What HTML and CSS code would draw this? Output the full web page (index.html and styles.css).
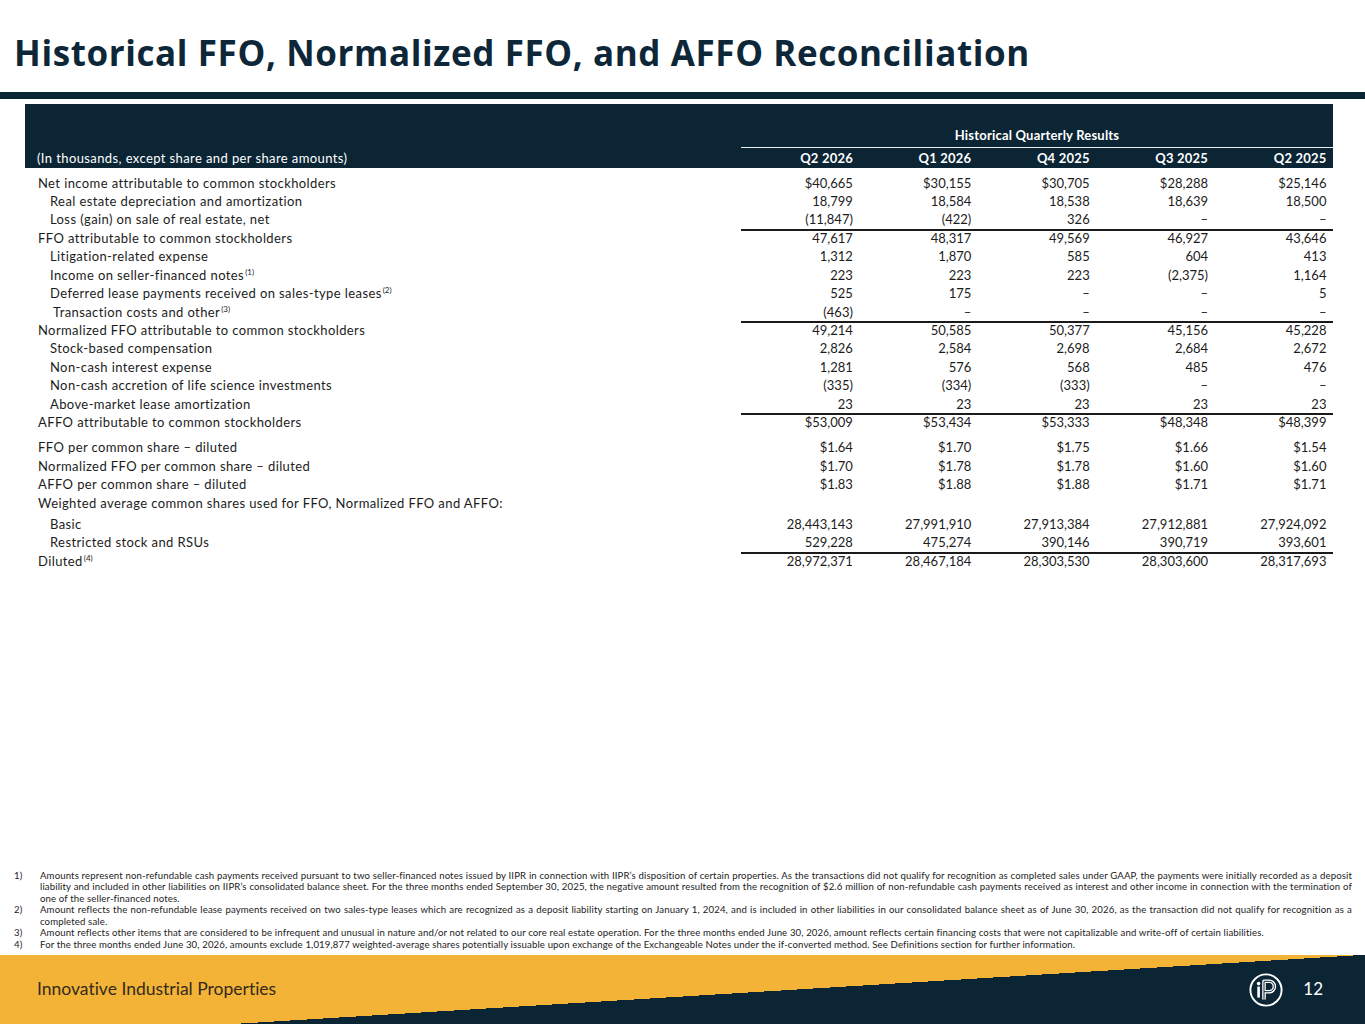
FILE: index.html
```html
<!DOCTYPE html>
<html lang="en">
<head>
<meta charset="utf-8">
<title>Historical FFO, Normalized FFO, and AFFO Reconciliation</title>
<link rel="stylesheet" href="styles.css">
</head>
<body>
<div class="page">
  <header class="title-area">
    <h1 class="title">Historical FFO, Normalized FFO, and AFFO Reconciliation</h1>
  </header>
  <div class="title-bar"></div>

  <section class="recon">
    <div class="thead">
      <div class="group-row">
        <div class="group-spacer"></div>
        <div class="group-label">Historical Quarterly Results</div>
      </div>
      <div class="row head-row">
        <div class="label">(In thousands, except share and per share amounts)</div>
        <div class="num">Q2 2026</div>
        <div class="num">Q1 2026</div>
        <div class="num">Q4 2025</div>
        <div class="num">Q3 2025</div>
        <div class="num">Q2 2025</div>
      </div>
    </div>

    <div class="tbody">
      <div class="row">
        <div class="label">Net income attributable to common stockholders</div>
        <div class="num">$40,665</div><div class="num">$30,155</div><div class="num">$30,705</div><div class="num">$28,288</div><div class="num">$25,146</div>
      </div>
      <div class="row">
        <div class="label indent">Real estate depreciation and amortization</div>
        <div class="num">18,799</div><div class="num">18,584</div><div class="num">18,538</div><div class="num">18,639</div><div class="num">18,500</div>
      </div>
      <div class="row">
        <div class="label indent">Loss (gain) on sale of real estate, net</div>
        <div class="num">(11,847)</div><div class="num">(422)</div><div class="num">326</div><div class="num">–</div><div class="num">–</div>
      </div>
      <div class="row total">
        <div class="label">FFO attributable to common stockholders</div>
        <div class="num">47,617</div><div class="num">48,317</div><div class="num">49,569</div><div class="num">46,927</div><div class="num">43,646</div>
      </div>
      <div class="row">
        <div class="label indent">Litigation-related expense</div>
        <div class="num">1,312</div><div class="num">1,870</div><div class="num">585</div><div class="num">604</div><div class="num">413</div>
      </div>
      <div class="row">
        <div class="label indent">Income on seller-financed notes<sup class="fn">(1)</sup></div>
        <div class="num">223</div><div class="num">223</div><div class="num">223</div><div class="num">(2,375)</div><div class="num">1,164</div>
      </div>
      <div class="row">
        <div class="label indent">Deferred lease payments received on sales-type leases<sup class="fn">(2)</sup></div>
        <div class="num">525</div><div class="num">175</div><div class="num">–</div><div class="num">–</div><div class="num">5</div>
      </div>
      <div class="row">
        <div class="label indent-wide">Transaction costs and other<sup class="fn">(3)</sup></div>
        <div class="num">(463)</div><div class="num">–</div><div class="num">–</div><div class="num">–</div><div class="num">–</div>
      </div>
      <div class="row total">
        <div class="label">Normalized FFO attributable to common stockholders</div>
        <div class="num">49,214</div><div class="num">50,585</div><div class="num">50,377</div><div class="num">45,156</div><div class="num">45,228</div>
      </div>
      <div class="row">
        <div class="label indent">Stock-based compensation</div>
        <div class="num">2,826</div><div class="num">2,584</div><div class="num">2,698</div><div class="num">2,684</div><div class="num">2,672</div>
      </div>
      <div class="row">
        <div class="label indent">Non-cash interest expense</div>
        <div class="num">1,281</div><div class="num">576</div><div class="num">568</div><div class="num">485</div><div class="num">476</div>
      </div>
      <div class="row">
        <div class="label indent">Non-cash accretion of life science investments</div>
        <div class="num">(335)</div><div class="num">(334)</div><div class="num">(333)</div><div class="num">–</div><div class="num">–</div>
      </div>
      <div class="row">
        <div class="label indent">Above-market lease amortization</div>
        <div class="num">23</div><div class="num">23</div><div class="num">23</div><div class="num">23</div><div class="num">23</div>
      </div>
      <div class="row total">
        <div class="label">AFFO attributable to common stockholders</div>
        <div class="num">$53,009</div><div class="num">$53,434</div><div class="num">$53,333</div><div class="num">$48,348</div><div class="num">$48,399</div>
      </div>

      <div class="row section-start">
        <div class="label">FFO per common share – diluted</div>
        <div class="num">$1.64</div><div class="num">$1.70</div><div class="num">$1.75</div><div class="num">$1.66</div><div class="num">$1.54</div>
      </div>
      <div class="row">
        <div class="label">Normalized FFO per common share – diluted</div>
        <div class="num">$1.70</div><div class="num">$1.78</div><div class="num">$1.78</div><div class="num">$1.60</div><div class="num">$1.60</div>
      </div>
      <div class="row">
        <div class="label">AFFO per common share – diluted</div>
        <div class="num">$1.83</div><div class="num">$1.88</div><div class="num">$1.88</div><div class="num">$1.71</div><div class="num">$1.71</div>
      </div>
      <div class="row tall">
        <div class="label">Weighted average common shares used for FFO, Normalized FFO and AFFO:</div>
      </div>
      <div class="row">
        <div class="label indent">Basic</div>
        <div class="num">28,443,143</div><div class="num">27,991,910</div><div class="num">27,913,384</div><div class="num">27,912,881</div><div class="num">27,924,092</div>
      </div>
      <div class="row">
        <div class="label indent">Restricted stock and RSUs</div>
        <div class="num">529,228</div><div class="num">475,274</div><div class="num">390,146</div><div class="num">390,719</div><div class="num">393,601</div>
      </div>
      <div class="row total">
        <div class="label">Diluted<sup class="fn">(4)</sup></div>
        <div class="num">28,972,371</div><div class="num">28,467,184</div><div class="num">28,303,530</div><div class="num">28,303,600</div><div class="num">28,317,693</div>
      </div>
    </div>
  </section>

  <div class="spacer"></div>

  <ol class="notes">
    <li><span class="note-no">1)</span><span class="note-text">Amounts represent non-refundable cash payments received pursuant to two seller-financed notes issued by IIPR in connection with IIPR’s disposition of certain properties. As the transactions did not qualify for recognition as completed sales under GAAP, the payments were initially recorded as a deposit liability and included in other liabilities on IIPR’s consolidated balance sheet. For the three months ended September 30, 2025, the negative amount resulted from the recognition of $2.6 million of non-refundable cash payments received as interest and other income in connection with the termination of one of the seller-financed notes.</span></li>
    <li><span class="note-no">2)</span><span class="note-text">Amount reflects the non-refundable lease payments received on two sales-type leases which are recognized as a deposit liability starting on January 1, 2024, and is included in other liabilities in our consolidated balance sheet as of June 30, 2026, as the transaction did not qualify for recognition as a completed sale.</span></li>
    <li><span class="note-no">3)</span><span class="note-text">Amount reflects other items that are considered to be infrequent and unusual in nature and/or not related to our core real estate operation. For the three months ended June 30, 2026, amount reflects certain financing costs that were not capitalizable and write-off of certain liabilities.</span></li>
    <li><span class="note-no">4)</span><span class="note-text">For the three months ended June 30, 2026, amounts exclude 1,019,877 weighted-average shares potentially issuable upon exchange of the Exchangeable Notes under the if-converted method. See Definitions section for further information.</span></li>
  </ol>

  <footer class="footer">
    <div class="company">Innovative Industrial Properties</div>
    <div class="footer-right">
      <svg class="logo" width="34" height="34" viewBox="0 0 34 34" aria-hidden="true">
        <circle cx="17" cy="17" r="15.6" fill="none" stroke="#ffffff" stroke-width="1.9"/>
        <circle cx="9.6" cy="10.6" r="1.8" fill="#ffffff"/>
        <rect x="8.3" y="13.6" width="2.6" height="11" fill="#ffffff"/>
        <path d="M15 26.5 V8.3 H20.2 A5.2 5.2 0 0 1 20.2 18.7 H15" fill="none" stroke="#ffffff" stroke-width="3.6" stroke-linejoin="round"/>
        <path d="M15 26.5 V8.3 H20.2 A5.2 5.2 0 0 1 20.2 18.7 H15" fill="none" stroke="#0b2535" stroke-width="1" stroke-linejoin="round"/>
      </svg>
      <span class="page-no">12</span>
    </div>
  </footer>
</div>
</body>
</html>
```

FILE: styles.css
```css
* {
  box-sizing: border-box;
}

html, body {
  margin: 0;
  padding: 0;
}

body {
  background: #ffffff;
  font-family: "Lato", "Open Sans", "Liberation Sans", sans-serif;
  font-variant-ligatures: none;
  color: #1c1c1c;
}

.page {
  width: 1365px;
  height: 1024px;
  display: flex;
  flex-direction: column;
  overflow: hidden;
}

.title-area {
  padding: 32px 14px 0;
}

.title {
  margin: 0;
  font-family: "Open Sans", "Lato", sans-serif;
  font-size: 35px;
  line-height: 42px;
  font-weight: 700;
  color: #0d2738;
  letter-spacing: 0.6px;
  white-space: nowrap;
}

.title-bar {
  margin-top: 18px;
  height: 7px;
  background: #0b2535;
}

.recon {
  margin: 5px 0 0 25px;
  width: 1308px;
  font-size: 13px;
}

.thead {
  background: #0b2535;
  color: #ffffff;
}

.group-row {
  display: grid;
  grid-template-columns: 716px 592px;
  height: 44px;
}

.group-label {
  align-self: end;
  font-weight: 700;
  text-align: center;
  line-height: 18px;
  padding-bottom: 3px;
  border-bottom: 1.5px solid #e6ecef;
  letter-spacing: 0.2px;
}

.row {
  display: grid;
  grid-template-columns: 716px repeat(5, 118.4px);
  height: 18.45px;
  line-height: 18.45px;
  white-space: nowrap;
}

.head-row {
  height: 20px;
  line-height: 20px;
}

.head-row .label {
  padding-left: 12px;
}

.head-row .num {
  font-weight: 700;
  letter-spacing: 0.2px;
}

.label {
  padding-left: 13px;
  letter-spacing: 0.4px;
}

.label.indent {
  padding-left: 25px;
}

.label.indent-wide {
  padding-left: 28px;
}

.num {
  text-align: right;
  padding-right: 6.5px;
}

.tbody {
  padding-top: 5.5px;
}

.total {
  background-image: linear-gradient(#1a1a1a, #1a1a1a);
  background-repeat: no-repeat;
  background-size: 592px 2px;
  background-position: right top;
}

.section-start {
  margin-top: 6.5px;
}

.row.tall {
  height: 21.5px;
  line-height: 21.5px;
}

.fn {
  font-size: 8px;
  line-height: 0;
  vertical-align: 5px;
  margin-left: 1px;
  letter-spacing: 0;
}

.spacer {
  flex: 1;
}

.notes {
  list-style: none;
  margin: 0 0 5px;
  padding: 0 13px 0 14px;
  font-size: 9.6px;
  line-height: 11.45px;
  letter-spacing: 0.13px;
  color: #222222;
}

.notes li {
  display: grid;
  grid-template-columns: 26px 1fr;
}

.note-text {
  text-align: justify;
}

.footer {
  height: 69px;
  flex: none;
  display: flex;
  align-items: center;
  justify-content: space-between;
  padding: 0 42px 0 37px;
  background: linear-gradient(176.5deg, #f3b336 83.1px, #0b2535 83.1px);
}

.company {
  font-size: 17.5px;
  color: #33291d;
  padding-bottom: 2px;
}

.footer-right {
  display: flex;
  align-items: center;
  gap: 20px;
}

.logo {
  display: block;
}

.page-no {
  color: #ffffff;
  font-size: 17px;
  padding-bottom: 2px;
}
```
